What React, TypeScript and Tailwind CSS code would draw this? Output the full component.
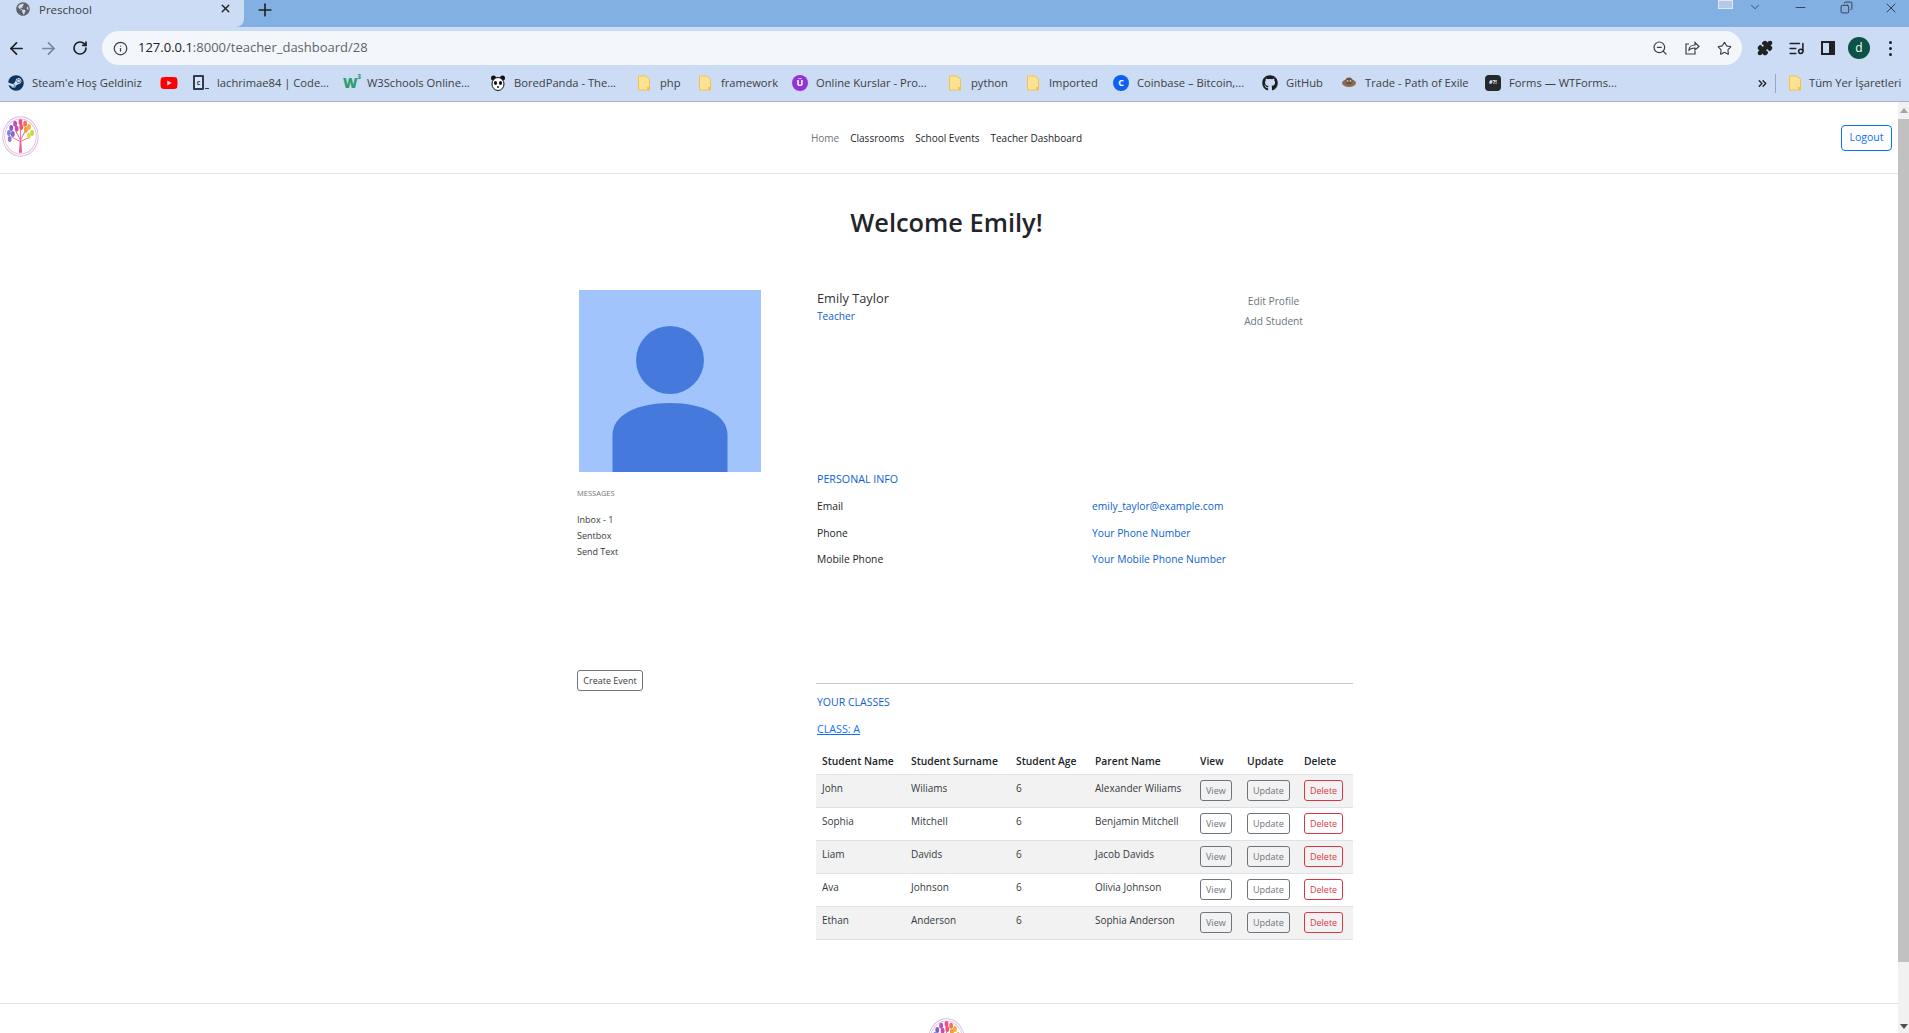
import { ArrowLeft, ArrowRight, ChevronDown, ChevronsRight, Copy, Info, ListMusic, Minus, Plus, Puzzle, RotateCw, Star, X, ZoomOut } from "lucide-react";
import { FaGithub, FaGlobeAmericas, FaSteam, FaYoutube } from "react-icons/fa";

const Folder = () => (
  <svg width="16" height="16" viewBox="0 0 16 16" className="shrink-0">
    <path d="M2.500 1h7l4 3v11h-11z" fill="#fde293" stroke="#f2c14e" />
    <rect x="11" y="12" width="2.500" height="3" fill="#f2c14e" />
  </svg>
);

const SmallIcon = ({ bg, color, label, round }: { bg: string; color: string; label: string; round?: boolean }) => (
  <span
    className={`flex h-4 w-4 shrink-0 items-center justify-center text-[9px] font-bold leading-none ${round ? "rounded-full" : "rounded-sm"}`}
    style={{ backgroundColor: bg, color }}
  >
    {label}
  </span>
);

const CodeIcon = () => (
  <span className="flex h-4 w-4 shrink-0 items-start">
    <span className="flex h-[15px] w-[11px] items-center justify-center rounded-[1px] border-2 border-[#2c3e50] bg-[#dbe5f3] text-[7px] font-bold leading-none text-[#2c3e50]">c</span>
    <span className="ml-[1px] mt-[13px] h-px w-[4px] bg-[#2c3e50]" />
  </span>
);

const W3Icon = () => (
  <span className="relative h-4 w-4 shrink-0 text-[14px] font-black leading-4 text-[#2f9e6e]">
    W<span className="absolute -right-[2px] -top-[1px] text-[6px] leading-none">3</span>
  </span>
);

const PandaIcon = () => (
  <svg width="16" height="16" viewBox="0 0 16 16" className="shrink-0">
    <circle cx="3.500" cy="3" r="2.500" fill="#111" />
    <circle cx="12.500" cy="3" r="2.500" fill="#111" />
    <ellipse cx="8" cy="9" rx="6" ry="6.500" fill="#fff" stroke="#111" />
    <ellipse cx="5.500" cy="8" rx="1.600" ry="2" fill="#111" />
    <ellipse cx="10.500" cy="8" rx="1.600" ry="2" fill="#111" />
    <circle cx="8" cy="12" r="1" fill="#111" />
  </svg>
);

const PoeIcon = () => (
  <svg width="16" height="16" viewBox="0 0 16 16" className="shrink-0">
    <ellipse cx="8" cy="8" rx="7" ry="4" fill="#8a6d52" />
    <ellipse cx="8" cy="6" rx="3.500" ry="3.500" fill="#6b5340" />
    <circle cx="6.500" cy="6" r="0.900" fill="#d8c7ae" />
    <circle cx="9.500" cy="6" r="0.900" fill="#d8c7ae" />
  </svg>
);

const bookmarks = [
  { icon: <FaSteam className="h-4 w-4 shrink-0 text-[#10355c]" />, title: "Steam'e Hoş Geldiniz", width: "w-[136px]" },
  { icon: <FaYoutube className="h-[18px] w-[18px] shrink-0 text-[#f00]" />, title: "", width: "w-[17px]" },
  { icon: <CodeIcon />, title: "lachrimae84 | Code...", width: "w-[134px]" },
  { icon: <W3Icon />, title: "W3Schools Online...", width: "w-[131px]" },
  { icon: <PandaIcon />, title: "BoredPanda - The...", width: "w-[130px]" },
  { icon: <Folder />, title: "php", width: "w-[45px]" },
  { icon: <Folder />, title: "framework", width: "w-[79px]" },
  { icon: <SmallIcon bg="#9333d6" color="#ffffff" label="Ü" round />, title: "Online Kurslar - Pro...", width: "w-[139px]" },
  { icon: <Folder />, title: "python", width: "w-[62px]" },
  { icon: <Folder />, title: "Imported", width: "w-[72px]" },
  { icon: <SmallIcon bg="#0f5ff0" color="#ffffff" label="C" round />, title: "Coinbase – Bitcoin,...", width: "w-[133px]" },
  { icon: <FaGithub className="h-4 w-4 shrink-0 text-[#1b1f23]" />, title: "GitHub", width: "w-[63px]" },
  { icon: <PoeIcon />, title: "Trade - Path of Exile", width: "w-[128px]" },
  { icon: <span className="flex h-4 w-4 shrink-0 items-center justify-center rounded-sm bg-[#24292e] text-[5.5px] font-bold leading-none text-white">#?!</span>, title: "Forms — WTForms...", width: "w-[134px]" },
];

const students = [
  ["John", "Wiliams", "6", "Alexander Wiliams"],
  ["Sophia", "Mitchell", "6", "Benjamin Mitchell"],
  ["Liam", "Davids", "6", "Jacob Davids"],
  ["Ava", "Johnson", "6", "Olivia Johnson"],
  ["Ethan", "Anderson", "6", "Sophia Anderson"],
];

const petals = [
  [9, 20, "#6d8fd8"], [12, 14, "#7f5fd0"], [17, 9, "#b950c0"], [24, 7, "#ee4a98"], [30, 9, "#f2735a"],
  [35, 13, "#f6ad38"], [39, 20, "#bfd843"], [14, 21, "#9a58c8"], [19, 15, "#d24aac"], [25, 13, "#ee5574"],
  [31, 16, "#f59a3a"], [35, 23, "#e6d845"], [10, 27, "#8c7ad8"],
];

const Logo = () => (
  <svg width="37" height="41" viewBox="0 0 48 48" preserveAspectRatio="none" className="shrink-0">
    <circle cx="24" cy="24" r="23" fill="none" stroke="#cfc0e6" strokeWidth="1.2" />
    <circle cx="24" cy="24" r="20.500" fill="none" stroke="#f2bcd8" strokeWidth="1.2" />
    <path d="M24 30L13 25M24 30L35 25M24 28L18 18M24 28L30 18M24 28V12" stroke="#f0689c" strokeWidth="1.2" fill="none" />
    <path d="M22 43L23.200 28h1.600L26 43z" fill="#f0568f" />
    {petals.map(([x, y, c], i) => (
      <ellipse key={i} cx={x as number} cy={y as number} rx="2.500" ry="3.500" fill={c as string} />
    ))}
  </svg>
);

const TableButton = ({ label, tone }: { label: string; tone: "gray" | "red" }) => (
  <button
    className={`block h-[21px] rounded-[3px] border px-[5px] text-[9px] leading-none ${
      tone === "red" ? "border-[#dc3545] text-[#dc3545]" : "border-[#6c757d] text-[#6c757d]"
    }`}
  >
    {label}
  </button>
);

export default function App() {
  return (
    <div className="flex h-[1033px] flex-col overflow-hidden bg-white font-['Open_Sans',sans-serif] text-[#212529]">
      {/* browser chrome */}
      <div className="flex h-[27px] items-start bg-[#83b0e3]">
        <div className="flex h-[27px] w-[244px] items-start rounded-br-lg bg-[#cbdcf4] pl-4 pr-3 pt-[2px]">
          <FaGlobeAmericas className="h-[14px] w-[14px] text-[#5f6368]" />
          <span className="ml-[9px] flex-1 text-[11.5px] leading-[15px] text-[#3c4043]">Preschool</span>
          <X className="h-[13px] w-[13px] text-[#202124]" strokeWidth={2.5} />
        </div>
        <Plus className="ml-[11px] mt-0 h-[20px] w-[20px] text-[#202124]" strokeWidth={2} />
        <span className="ml-auto h-[9px] w-[15px] border border-[#dde7f5] bg-[#b5c9e4]" />
        <ChevronDown className="ml-[15px] h-[14px] w-[14px] text-[#202124]" strokeWidth={1.2} />
        <Minus className="ml-[31px] h-[15px] w-[15px] text-[#202124]" strokeWidth={1.2} />
        <Copy className="ml-[32px] mt-[1px] h-[13px] w-[13px] -scale-x-100 text-[#202124]" strokeWidth={1.4} />
        <X className="ml-[30px] mr-[10px] h-[16px] w-[16px] text-[#202124]" strokeWidth={1.2} />
      </div>

      <div className="flex h-[38px] items-center bg-[#cbdcf4] pt-[4px]">
        <ArrowLeft className="ml-[7px] h-[19px] w-[19px] text-[#202124]" strokeWidth={2.2} />
        <ArrowRight className="ml-[13px] h-[19px] w-[19px] text-[#7b8794]" strokeWidth={2.2} />
        <RotateCw className="ml-[14px] h-[16px] w-[16px] text-[#202124]" strokeWidth={2.5} />
        <div className="ml-[14px] flex h-[34px] w-[1640px] items-center rounded-full bg-[#f3f7fc] pl-[11px] pr-[10px]">
          <Info className="h-[15px] w-[15px] text-[#3c4043]" strokeWidth={2} />
          <span className="ml-[10px] flex-1 text-[13px] text-[#5f6368]">
            <span className="text-[#202124]">127.0.0.1</span>:8000/teacher_dashboard/28
          </span>
          <ZoomOut className="h-[16px] w-[16px] text-[#3c4043]" strokeWidth={1.8} />
          <svg width="16" height="16" viewBox="0 0 16 16" fill="none" stroke="#3c4043" strokeWidth="1.2" className="ml-[16px]">
            <path d="M5 4H2v10h9v-3" />
            <path d="M5 10c0-3 2.500-5 6-5V2.500L15 6.500 11 10V8c-2.500 0-4.500.5-6 2z" />
          </svg>
          <Star className="ml-[17px] h-[15px] w-[15px] text-[#3c4043]" strokeWidth={1.8} />
        </div>
        <Puzzle className="ml-[15px] h-[16px] w-[16px] fill-[#202124] text-[#202124]" />
        <ListMusic className="ml-[15px] h-[17px] w-[17px] text-[#202124]" strokeWidth={2.2} />
        <span className="ml-[16px] h-[14px] w-[14px] border-2 border-r-[6px] border-[#202124]" />
        <span className="ml-[13px] flex h-[22px] w-[22px] items-center justify-center rounded-full bg-[#0b5345] text-[12px] text-white">d</span>
        <span className="ml-[19px] flex flex-col gap-[3px]">
          <span className="h-[3px] w-[3px] rounded-full bg-[#202124]" />
          <span className="h-[3px] w-[3px] rounded-full bg-[#202124]" />
          <span className="h-[3px] w-[3px] rounded-full bg-[#202124]" />
        </span>
      </div>

      <div className="flex h-[37px] items-center border-b border-[#a3b3cf] bg-[#cbdcf4] pl-2">
        {bookmarks.map((b) => (
          <div key={b.title + b.width} className={`mr-[16px] flex flex-none items-center gap-2 whitespace-nowrap text-[11.2px] text-[#3c4043] ${b.width}`}>
            {b.icon}
            {b.title && <span>{b.title}</span>}
          </div>
        ))}
        <ChevronsRight className="ml-[121px] h-[13px] w-[13px] text-[#202124]" strokeWidth={2.5} />
        <span className="ml-[6px] h-[19px] w-px bg-[#9aa8bd]" />
        <span className="ml-[11px] flex items-center gap-[6px] whitespace-nowrap text-[11.2px] text-[#3c4043]">
          <Folder />
          Tüm Yer İşaretleri
        </span>
      </div>

      {/* page and scrollbar */}
      <div className="flex min-h-0 flex-1">
        <div className="min-w-0 flex-1 overflow-hidden">
          <nav className="relative flex h-[72px] items-center justify-center border-b border-[#e2e2e2] pr-[5px]">
            <div className="absolute left-[2px] top-[14px]">
              <Logo />
            </div>
            <div className="mt-[2px] flex gap-[11px] text-[10px] text-[#212529]">
              <span className="text-[#6c757d]">Home</span>
              <span>Classrooms</span>
              <span>School Events</span>
              <span>Teacher Dashboard</span>
            </div>
            <button className="absolute right-[6px] top-[23px] h-[26px] w-[51px] rounded-[4px] border border-[#0d6efd] text-[10.5px] text-[#0d6efd]">
              Logout
            </button>
          </nav>

          <h1 className="mt-[30px] pr-[5px] text-center text-[25.4px] font-semibold leading-[36px] text-[#212529]">Welcome Emily!</h1>

          <div className="ml-[577px] mt-[50px] flex w-[776px]">
            <div className="w-[239px]">
              <div className="ml-[2px] h-[182px] w-[182px] overflow-hidden bg-[#a0c4fb]">
                <svg width="182" height="182" viewBox="0 0 182 182">
                  <ellipse cx="91" cy="70" rx="34" ry="34" fill="#4679dc" />
                  <path d="M33.500 182V145C33.500 125 58 113 91 113C124 113 148.500 125 148.500 145V182z" fill="#4679dc" />
                </svg>
              </div>
              <p className="mt-[16px] text-[7.5px] uppercase leading-[10px] text-[#6c757d]">Messages</p>
              <ul className="mt-[16.5px] space-y-[6px] text-[9px] leading-[10px] text-[#343a40]">
                <li>Inbox - 1</li>
                <li>Sentbox</li>
                <li>Send Text</li>
              </ul>
              <button className="mt-[113px] h-[21px] w-[66px] rounded-[3px] border border-[#6c757d] text-[9px] leading-none text-[#343a40]">
                Create Event
              </button>
            </div>

            <div className="w-[537px]">
              <div className="flex h-[182px] items-start justify-between pl-[1px]">
                <div className="pt-[1px]">
                  <p className="text-[12.8px] leading-[15px] text-[#333333]">Emily Taylor</p>
                  <p className="mt-[3px] text-[10.2px] leading-[14px] text-[#0d5fd0]">Teacher</p>
                </div>
                <div className="mr-[50px] pt-[0.5px] text-center text-[10.2px] leading-[20px] text-[#6c757d]">
                  <p>Edit Profile</p>
                  <p>Add Student</p>
                </div>
              </div>
              <p className="pl-[1px] text-[10.7px] uppercase leading-[14px] text-[#0d5fd0]">Personal Info</p>
              <div className="mt-[13px] grid grid-cols-[275px_1fr] gap-y-[12.5px] pl-[1px] text-[10.3px] leading-[14px]">
                <span className="font-medium text-[#212529]">Email</span>
                <span className="text-[#0d5fd0]">emily_taylor@example.com</span>
                <span className="font-medium text-[#212529]">Phone</span>
                <span className="text-[#0d5fd0]">Your Phone Number</span>
                <span className="font-medium text-[#212529]">Mobile Phone</span>
                <span className="text-[#0d5fd0]">Your Mobile Phone Number</span>
              </div>

              <hr className="mt-[117px] border-[#c8c8c8]" />
              <p className="mt-[11px] pl-[1px] text-[10.5px] uppercase leading-[14px] text-[#0d5fd0]">Your Classes</p>
              <a className="mt-[13px] block pl-[1px] text-[10.7px] uppercase leading-[14px] text-[#0d6efd] underline">Class: A</a>

              <table className="mt-[10px] w-full table-fixed border-collapse text-[10px]">
                <colgroup>
                  <col className="w-[89px]" />
                  <col className="w-[105px]" />
                  <col className="w-[79px]" />
                  <col className="w-[105px]" />
                  <col className="w-[47px]" />
                  <col className="w-[57px]" />
                  <col />
                </colgroup>
                <thead>
                  <tr className="h-[28px] border-b border-[#dee2e6] text-left">
                    {["Student Name", "Student Surname", "Student Age", "Parent Name", "View", "Update", "Delete"].map((h) => (
                      <th key={h} className="whitespace-nowrap pl-[6px] pt-[3px] text-[10.3px] font-semibold text-[#212529]">{h}</th>
                    ))}
                  </tr>
                </thead>
                <tbody>
                  {students.map((s, i) => (
                    <tr key={s[0]} className={`h-[33px] border-b border-[#dee2e6] ${i % 2 === 0 ? "bg-[#f2f2f2]" : "bg-white"}`}>
                      {s.map((v, j) => (
                        <td key={j} className="whitespace-nowrap pb-[4px] pl-[6px] text-[#343a40]">{v}</td>
                      ))}
                      <td className="pl-[6px]"><TableButton label="View" tone="gray" /></td>
                      <td className="pl-[6px]"><TableButton label="Update" tone="gray" /></td>
                      <td className="pl-[6px]"><TableButton label="Delete" tone="red" /></td>
                    </tr>
                  ))}
                </tbody>
              </table>
            </div>
          </div>

          <footer className="mt-[63px] flex justify-center border-t border-[#dee2e6] pr-[5px] pt-[14px]">
            <Logo />
          </footer>
        </div>

        <div className="flex w-[11px] shrink-0 flex-col items-center bg-[#f1f1f1]">
          <span className="mt-[6px] h-0 w-0 border-x-[4px] border-b-[5px] border-x-transparent border-b-[#a3a3a3]" />
          <span className="mt-[6px] h-[843px] w-full shrink-0 bg-[#c1c1c1]" />
          <span className="mb-[4px] mt-auto h-0 w-0 border-x-[4px] border-t-[5px] border-x-transparent border-t-[#505050]" />
        </div>
      </div>
    </div>
  );
}
